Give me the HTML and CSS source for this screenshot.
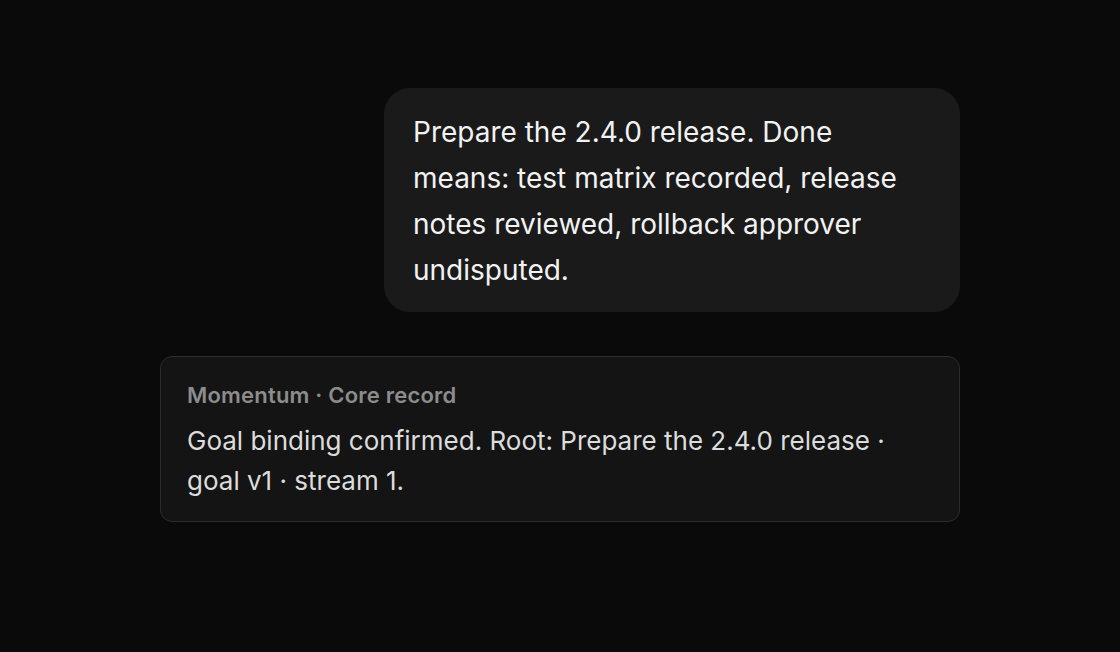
FILE: index.html
```html
<!DOCTYPE html>
<html lang="en">
<head>
<meta charset="utf-8">
<title>Momentum</title>
<link rel="stylesheet" href="styles.css">
</head>
<body>
<main class="thread">
  <div class="user-row">
    <div class="bubble">Prepare the 2.4.0 release. Done means: test matrix recorded, release notes reviewed, rollback approver undisputed.</div>
  </div>
  <section class="card">
    <div class="card-title">Momentum · Core record</div>
    <div class="card-body">Goal binding confirmed. Root: Prepare the 2.4.0 release · goal v1 · stream 1.</div>
  </section>
</main>
</body>
</html>
```

FILE: styles.css
```css
html, body {
  margin: 0;
  padding: 0;
  background: #0a0a0a;
  height: 100%;
}
body {
  font-family: Inter, "Noto Sans", sans-serif;
  color: #ececec;
}
.thread {
  width: 800px;
  margin: 0 auto;
  padding-top: 88px;
  display: flex;
  flex-direction: column;
  gap: 44px;
}
.user-row {
  display: flex;
  justify-content: flex-end;
}
.bubble {
  width: 576px;
  box-sizing: border-box;
  background: #1a1a1a;
  border-radius: 26px;
  padding: 21px 28px 19px 29px;
  font-size: 28px;
  line-height: 46px;
  color: #f2f2f2;
}
.card {
  background: #141414;
  border: 1px solid #2c2c2c;
  border-radius: 12px;
  padding: 24px 26px 20px 26px;
}
.card-title {
  font-size: 22px;
  font-weight: 600;
  letter-spacing: 0.2px;
  color: #8c8c8c;
  line-height: 28px;
  margin-bottom: 12px;
}
.card-body {
  font-size: 26px;
  line-height: 40px;
  color: #dcdcdc;
}
```
